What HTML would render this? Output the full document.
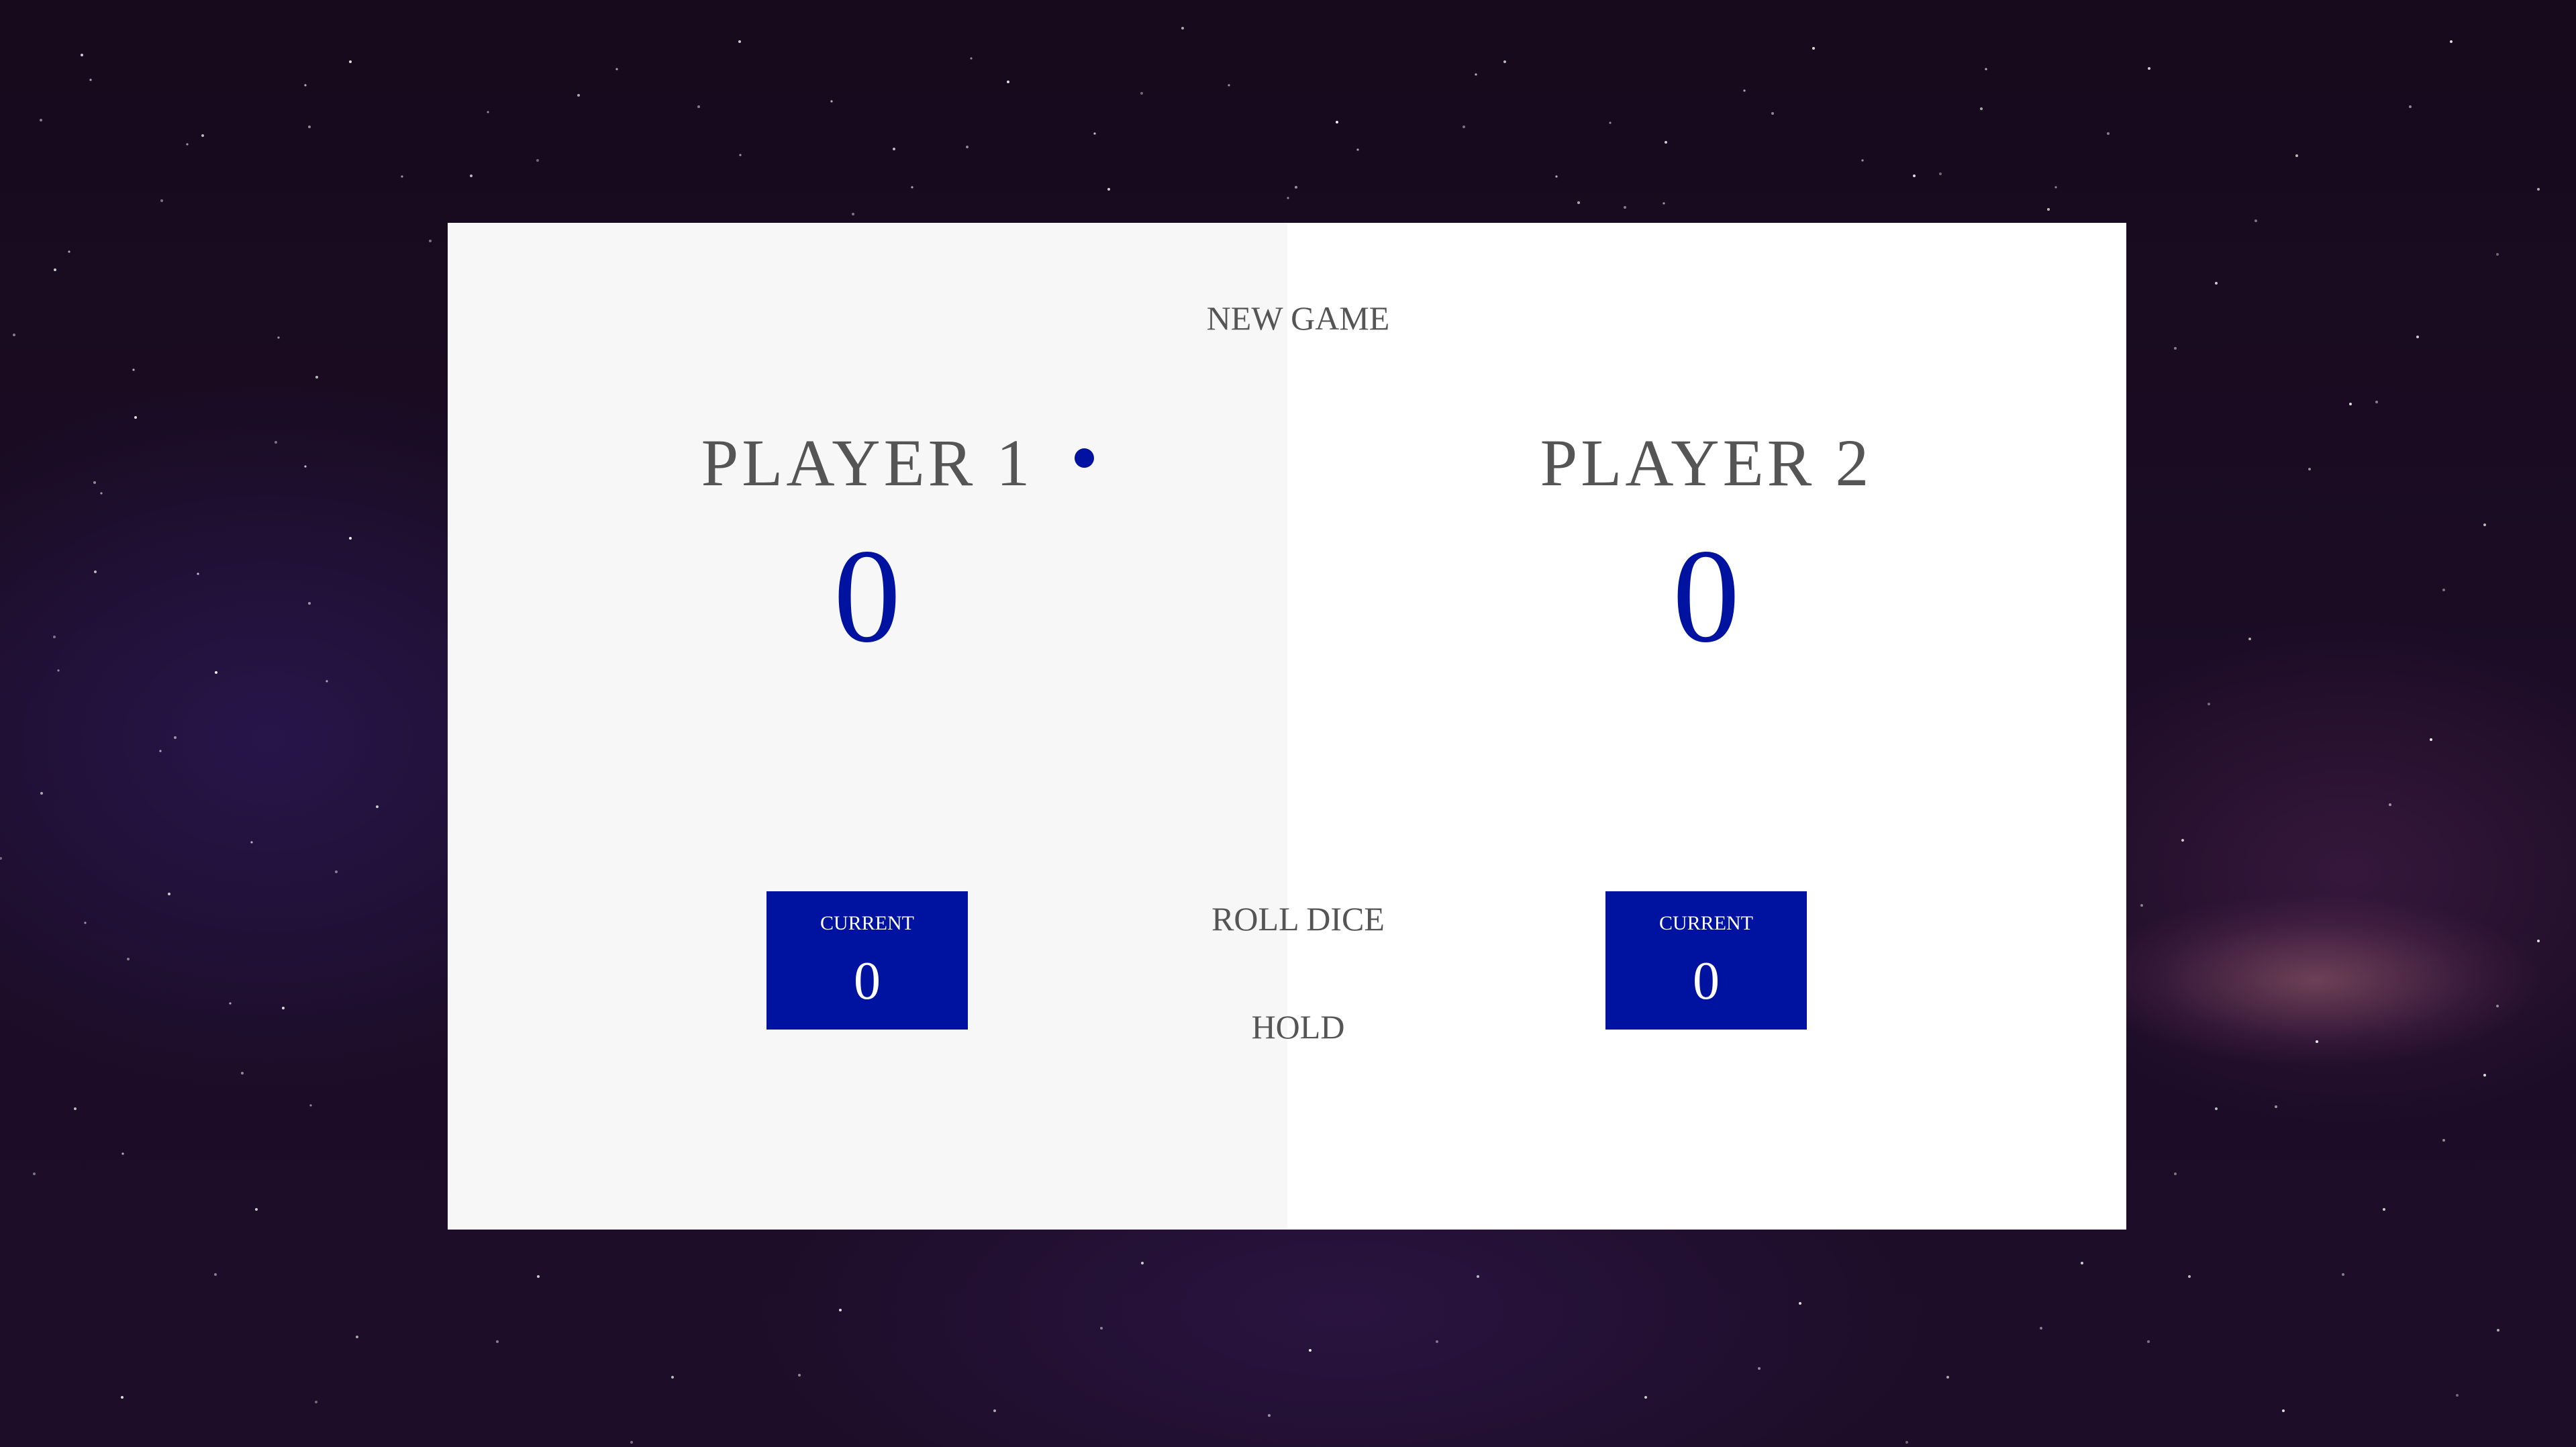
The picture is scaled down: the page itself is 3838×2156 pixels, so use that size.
<!DOCTYPE html>
<html><head><meta charset="utf-8"><style>
html,body{margin:0;padding:0}
body{width:3838px;height:2156px;overflow:hidden;position:relative;font-family:"Liberation Serif","Times New Roman",serif;
background:
radial-gradient(ellipse 420px 160px at 3450px 1460px,rgba(190,120,130,.45),rgba(120,60,100,.2) 55%,transparent 80%),
radial-gradient(ellipse 700px 500px at 3500px 1300px,rgba(90,40,90,.4),transparent 75%),
radial-gradient(ellipse 900px 700px at 400px 1100px,rgba(50,30,110,.5),transparent 75%),
radial-gradient(ellipse 1200px 500px at 2000px 1950px,rgba(60,30,100,.4),transparent 75%),
linear-gradient(180deg,#170a1c 0%,#1c0c26 50%,#1d0d28 100%);}
.stars{position:absolute;left:0;top:0;width:4px;height:4px;border-radius:50%;background:transparent;
box-shadow:
120px 80px #cfc8e0,300px 200px #bbb,520px 90px #ddd,860px 140px #aaa,1100px 60px #ccc,1330px 220px #bbb,1500px 120px #ddd,1760px 40px #aaa,1990px 180px #eee,2240px 90px #bbb,2480px 210px #ccc,2700px 70px #ddd,2950px 160px #aaa,3200px 100px #ccc,3420px 230px #bbb,3650px 60px #ddd,3780px 280px #aaa,
80px 400px #ccc,200px 620px #ddd,140px 850px #bbb,320px 1000px #eee,60px 1180px #aaa,250px 1330px #ccc,420px 1500px #ddd,110px 1650px #bbb,380px 1800px #ccc,530px 1990px #aaa,180px 2080px #ddd,520px 800px #eee,560px 1200px #ccc,470px 560px #bbb,
3300px 420px #ccc,3500px 600px #ddd,3700px 780px #bbb,3350px 950px #aaa,3620px 1100px #eee,3250px 1250px #ccc,3780px 1400px #ddd,3300px 1650px #bbb,3550px 1800px #ccc,3720px 1980px #aaa,3400px 2100px #ddd,3600px 500px #ccc,3450px 1550px #eee,3700px 1600px #ddd,3260px 1900px #bbb,
800px 1900px #ccc,1000px 2050px #bbb,1250px 1950px #ddd,1480px 2100px #aaa,1700px 1880px #ccc,1950px 2010px #eee,2200px 1900px #bbb,2450px 2080px #ccc,2680px 1940px #ddd,2900px 2050px #aaa,3100px 1880px #ccc,
700px 260px #bbb,1650px 280px #ccc,2350px 300px #aaa,2850px 260px #ddd,3050px 310px #bbb;}
.s2{transform:translate(37px,53px) scale(.8);opacity:.8}
.s3{transform:translate(-61px,97px);opacity:.6}
.panel{position:absolute;left:667px;top:332px;width:2501px;height:1500px;background:#fff}
.left{position:absolute;left:0;top:0;width:1251px;height:1500px;background:#f7f7f7}
.t{position:absolute;line-height:1;white-space:nowrap;color:#555;text-align:center}
.name{font-size:100px;letter-spacing:5px;width:1250px;top:308px}
.score{font-size:200px;color:#0013a0;width:1250px;top:457px}
.btn{font-size:50px;width:1000px;left:767px}
.box{position:absolute;top:996px;width:300px;height:206px;background:#0013a0}
.cur{position:absolute;width:300px;text-align:center;color:#fff;line-height:1;font-size:30px;top:33px}
.cv{position:absolute;width:300px;text-align:center;color:#fff;line-height:1;font-size:80px;top:94px}
.dot{position:absolute;left:934px;top:336px;width:29px;height:29px;border-radius:50%;background:#0013a0}
</style></head><body>
<div class="stars"></div><div class="stars s2"></div><div class="stars s3"></div>
<div class="panel">
<div class="left"></div>
<div class="t btn" style="top:117px">NEW GAME</div>
<div class="t name" style="left:0">PLAYER 1</div>
<div class="dot"></div>
<div class="t score" style="left:0">0</div>
<div class="t name" style="left:1250px">PLAYER 2</div>
<div class="t score" style="left:1250px">0</div>
<div class="box" style="left:475px"><div class="cur">CURRENT</div><div class="cv">0</div></div>
<div class="box" style="left:1725px"><div class="cur">CURRENT</div><div class="cv">0</div></div>
<div class="t btn" style="top:1012px">ROLL DICE</div>
<div class="t btn" style="top:1173px">HOLD</div>
</div>
</body></html>
